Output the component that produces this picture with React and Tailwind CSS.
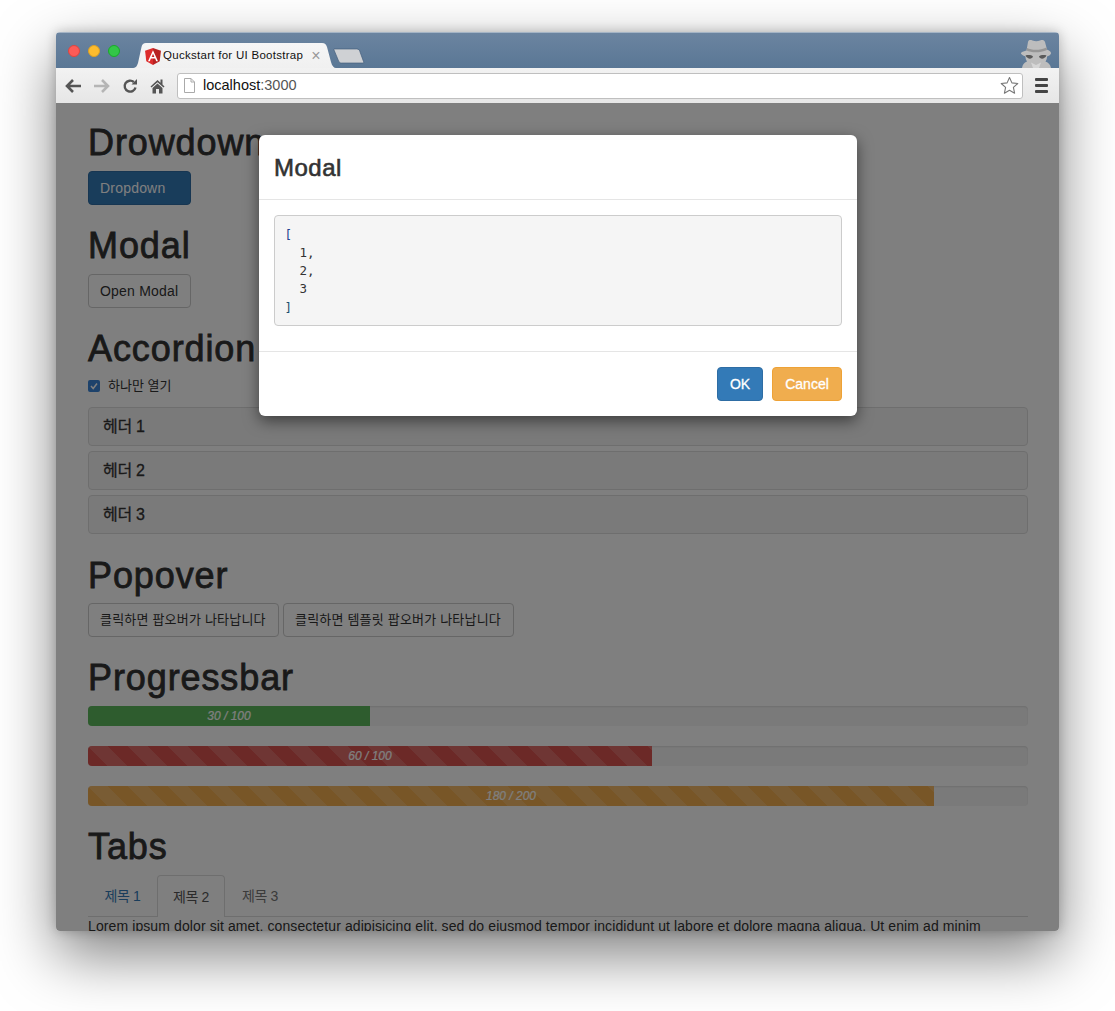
import React from "react";

const SANS = "[font-family:'Liberation_Sans','Noto_Sans_CJK_KR',sans-serif]";

function Heading({ children, className = "" }) {
  return (
    <h1 className={`h-10 text-[36px] leading-[44px] tracking-[0.025em] text-[#333] [-webkit-text-stroke:0.8px_#333] ${className}`}>
      {children}
    </h1>
  );
}

function Btn({ children, className = "", tone = "border-[#ccc] bg-white text-[#333]" }) {
  return (
    <button className={`h-[34px] rounded-[4px] border pl-[11px] text-left tracking-[0.2px] ${tone} ${className}`}>
      {children}
    </button>
  );
}

function Bar({ pct, label, color, striped, className = "" }) {
  return (
    <div className={`h-5 overflow-hidden rounded-[4px] bg-[#f5f5f5] shadow-[inset_0_1px_2px_rgba(0,0,0,0.1)] ${className}`}>
      <div
        style={{ width: pct + "%" }}
        className={`h-5 text-center text-[12px] italic leading-5 text-white [-webkit-text-stroke:0.2px_#fff] ${color} ${
          striped
            ? "bg-[linear-gradient(45deg,rgba(255,255,255,0.15)_25%,transparent_25%,transparent_50%,rgba(255,255,255,0.15)_50%,rgba(255,255,255,0.15)_75%,transparent_75%,transparent)] bg-[length:40px_40px]"
            : ""
        }`}
      >
        {label}
      </div>
    </div>
  );
}

function Panel({ children }) {
  return (
    <div className="flex h-[39px] items-center rounded-[4px] border border-[#ddd] bg-[#f5f5f5] px-[14px] text-[16px] tracking-[-0.3px] text-[#333] [-webkit-text-stroke:0.3px_#333]">
      {children}
    </div>
  );
}

function Dot({ color, border }) {
  return <span className={`h-3 w-3 rounded-full border ${color} ${border}`} />;
}

function TabShape() {
  return (
    <svg className="absolute inset-0" width="204" height="25" viewBox="0 0 204 25">
      <defs>
        <linearGradient id="tabg" x1="0" y1="0" x2="0" y2="1">
          <stop offset="0" stopColor="#f6f6f6" />
          <stop offset="1" stopColor="#f0f0f0" />
        </linearGradient>
      </defs>
      <path d="M0 25C4 25 5 23 6 20L9.500 4C10 1.500 11.500 0 14 0H190C193 0 194 1.500 195 4L199 19C200 23 202 25 204 25Z" fill="url(#tabg)" />
    </svg>
  );
}

function AngularLogo() {
  return (
    <svg className="mr-[2px] shrink-0" width="16" height="17" viewBox="0 0 15 16">
      <path d="M7.500 0L0 2.700L1.200 12.500L7.500 16Z" fill="#dd2c2c" />
      <path d="M7.500 0L15 2.700L13.800 12.500L7.500 16Z" fill="#b82222" />
      <path d="M7.500 2L2.800 12.400H4.500L5.500 9.900H9.500L10.500 12.400H12.200ZM6.200 8.500L7.500 5.300L8.800 8.500Z" fill="#fff" />
    </svg>
  );
}

function Spy() {
  return (
    <svg width="34" height="29" viewBox="0 0 34 29">
      <path d="M3 29C3.500 26 5 23.500 8 22.500C7 21 6.500 19.500 6.500 17.500C4 16.500 1.500 15 2 14C3 12.500 5.500 12 7.500 11.500L9 3C9.500 1 11 0.500 13.500 1.500C16 2.500 18.500 2.500 21 1.500C23.500 0.500 25 1 26 3L28 10.500C30 11.500 32.500 13 32 14.500C31.500 16 29.500 17 28 17.500C28 19.500 27.500 21 26.500 22.500C29.500 23.500 31.500 26 32 29Z" fill="#bdbdbd" />
      <path d="M8 9C13 11.500 21 11.500 27.500 8.500L28 11C21 14 13 14 7.500 11.500Z" fill="#969696" />
      <path d="M6.500 16.500C9 15.800 12.500 16 14 17.500C13 20.500 8.500 20.500 6.500 16.500ZM27.500 16.500C25 15.800 21.500 16 20 17.500C21 20.500 25.500 20.500 27.500 16.500Z" fill="#5a5a5a" />
      <path d="M12 23.500L17 26L22 23.500L20 29H14Z" fill="#d6d6d6" />
    </svg>
  );
}

export default function App() {
  return (
    <div className={`h-[1011px] w-[1115px] overflow-hidden bg-white pl-14 pt-8 text-[14px] ${SANS}`}>
      <div className="relative flex h-[899px] w-[1003px] flex-col overflow-hidden rounded-[4px] shadow-[0_24px_60px_rgba(0,0,0,0.5),0_0_12px_rgba(0,0,0,0.22)]">
        {/* title bar */}
        <div className="flex h-9 shrink-0 items-end justify-between border-t border-[#a5b4c5] bg-[linear-gradient(#6b84a0,#5a7795)]">
          <div className="flex h-full items-end">
            <div className="mb-[11px] ml-3 mr-3 flex gap-2">
              <Dot color="bg-[#fc5b57]" border="border-[#e0443e]" />
              <Dot color="bg-[#fdbc2e]" border="border-[#dea123]" />
              <Dot color="bg-[#33c748]" border="border-[#1aab29]" />
            </div>
            <div className="relative h-[25px] w-[204px] shrink-0">
              <TabShape />
              <div className="relative flex h-full items-center pl-[13px] pt-[1px] text-[11.500px] text-[#111]">
                <AngularLogo />
                <span className="whitespace-nowrap tracking-[0.28px]">Quckstart for UI Bootstrap</span>
                <span className="ml-[8px] text-[16px] leading-none text-[#999]">×</span>
              </div>
            </div>
            <svg className="mb-[4px] ml-[-3px] shrink-0" width="32" height="16" viewBox="0 0 34 17">
              <path d="M1.500 1H25C27 1 28 2 28.500 3.500L32.500 14.500C33 15.500 32.500 16 31 16H9C7.500 16 6.500 15 6 14L1 2C0.800 1.400 1 1 1.500 1Z" fill="#cfd1d4" stroke="#48627f" strokeWidth="0.8" />
            </svg>
          </div>
          <div className="mr-[6px] flex items-end">
            <Spy />
          </div>
        </div>

        {/* toolbar */}
        <div className="flex h-[35px] shrink-0 items-center bg-[linear-gradient(#f2f2f2,#e6e6e6)] pl-[9px]">
          <svg className="mr-[11px]" width="17" height="14" viewBox="0 0 17 14"><path d="M8 1L2 7L8 13M2 7H16" fill="none" stroke="#555" strokeWidth="2.600" /></svg>
          <svg className="mr-3" width="17" height="14" viewBox="0 0 17 14"><path d="M9 1L15 7L9 13M15 7H1" fill="none" stroke="#b5b5b5" strokeWidth="2.600" /></svg>
          <svg className="mr-3" width="16" height="16" viewBox="0 0 16 16"><path d="M13.500 9.500A5.500 5.500 0 1 1 11.800 4" fill="none" stroke="#555" strokeWidth="2.400" /><path d="M9.500 6.500H15V1Z" fill="#555" /></svg>
          <svg className="mr-3" width="15" height="16" viewBox="0 0 15 16"><path d="M7.500 2L0.500 8.500L1.500 9.500L7.500 4.200L13.500 9.500L14.500 8.500L12.500 6.600V1.500H10.500V4.800ZM2.500 10V15.500H6V11H9V15.500H12.500V10L7.500 5.500Z" fill="#555" /></svg>
          <div className="flex h-[26px] w-[846px] items-center rounded-[3px] border border-[#bfbfbf] bg-white pl-[6px] pr-[3px] text-[14.500px]">
            <svg className="mr-2" width="11" height="15" viewBox="0 0 11 15"><path d="M0.500 0.500H7L10.500 4V14.500H0.500ZM7 0.500V4H10.500" fill="#fff" stroke="#aaa" /></svg>
            <span className="text-[#111]">localhost</span>
            <span className="text-[#555]">:3000</span>
            <svg className="ml-auto" width="19" height="19" viewBox="0 0 19 19"><path d="M9.500 1.500L11.900 6.900L17.800 7.500L13.400 11.400L14.600 17.200L9.500 14.300L4.400 17.200L5.600 11.400L1.200 7.500L7.100 6.900Z" fill="#fff" stroke="#777" strokeWidth="1.100" strokeLinejoin="round" /></svg>
          </div>
          <div className="ml-3 flex flex-col gap-[3px]">
            <span className="h-[3px] w-[13px] rounded-[1px] bg-[#444]" />
            <span className="h-[3px] w-[13px] rounded-[1px] bg-[#444]" />
            <span className="h-[3px] w-[13px] rounded-[1px] bg-[#444]" />
          </div>
        </div>

        {/* page */}
        <div className="relative min-h-0 flex-1 overflow-hidden bg-white">
          <div className="flex flex-col pl-8 pr-[31px] pt-[18px] leading-5 text-[#333]">
            <Heading>Drowdown</Heading>
            <Btn className="mt-[10px] w-[103px]" tone="border-[#2e6da4] bg-[#337ab7] text-white">Dropdown</Btn>

            <Heading className="mt-[19px]">Modal</Heading>
            <Btn className="mt-[10px] w-[103px]">Open Modal</Btn>

            <Heading className="mt-[19px]">Accordion</Heading>
            <label className="mt-[9px] flex h-5 items-center text-[13px]">
              <span className="mr-2 flex h-3 w-3 items-center justify-center rounded-[2px] bg-[#3a85d6]">
                <svg width="10" height="10" viewBox="0 0 10 10"><path d="M2 5L4.200 7.500L8 2.500" fill="none" stroke="#fff" strokeWidth="1.500" /></svg>
              </span>
              하나만 열기
            </label>
            <div className="mt-[11px] flex flex-col gap-[5px]">
              <Panel>헤더 1</Panel>
              <Panel>헤더 2</Panel>
              <Panel>헤더 3</Panel>
            </div>

            <Heading className="mt-5">Popover</Heading>
            <div className="mt-[9px] flex gap-1 text-[13px]">
              <Btn className="w-[191px] whitespace-nowrap">클릭하면 팝오버가 나타납니다</Btn>
              <Btn className="w-[231px] whitespace-nowrap">클릭하면 템플릿 팝오버가 나타납니다</Btn>
            </div>

            <Heading className="mt-[19px]">Progressbar</Heading>
            <Bar className="mt-[10px]" pct={30} label="30 / 100" color="bg-[#5cb85c]" />
            <Bar className="mt-5" pct={60} label="60 / 100" color="bg-[#d9534f]" striped />
            <Bar className="mt-5" pct={90} label="180 / 200" color="bg-[#f0ad4e]" striped />

            <Heading className="mt-[19px]">Tabs</Heading>
            <div className="mt-[10px] flex h-[42px] items-stretch border-b border-[#ddd] tracking-[-0.3px]">
              <span className="flex w-[69px] items-center justify-center text-[#337ab7]">제목 1</span>
              <span className="-mb-px flex w-[68px] items-center justify-center rounded-t-[4px] border border-b-0 border-[#ddd] bg-white text-[#555]">제목 2</span>
              <span className="flex w-[70px] items-center justify-center text-[#777]">제목 3</span>
            </div>
            <p className="-mt-px whitespace-nowrap text-[14px] leading-5 tracking-[0.1px]">
              Lorem ipsum dolor sit amet, consectetur adipisicing elit, sed do eiusmod tempor incididunt ut labore et dolore magna aliqua. Ut enim ad minim
            </p>
          </div>

          {/* backdrop */}
          <div className="absolute inset-0 bg-black/50" />

          {/* modal */}
          <div className="absolute left-[203px] top-8 w-[598px] rounded-[6px] bg-white shadow-[0_5px_15px_rgba(0,0,0,0.5)]">
            <div className="flex h-[65px] items-center border-b border-[#e5e5e5] px-[15px] pt-[1px]">
              <h3 className="text-[24px] tracking-[0.02em] text-[#333] [-webkit-text-stroke:0.6px_#333]">Modal</h3>
            </div>
            <div className="h-[152px] border-b border-[#e5e5e5] p-[15px]">
              <pre className="h-[111px] rounded-[4px] border border-[#ccc] bg-[#f5f5f5] px-[9.500px] py-[9.500px] font-['DejaVu_Sans_Mono',monospace] text-[12.500px] leading-[18.300px] text-[#333]">
                <span className="text-[#1f3f8f]">[</span>
                {"\n  1,\n  2,\n  3\n"}
                <span className="text-[#1f4f6f]">]</span>
              </pre>
            </div>
            <div className="flex justify-end gap-[9px] p-[15px]">
              <button className="h-[34px] w-[46px] rounded-[4px] border border-[#2e6da4] bg-[#337ab7] text-[14px] text-white [-webkit-text-stroke:0.3px_#fff]">OK</button>
              <button className="h-[34px] w-[70px] rounded-[4px] border border-[#eea236] bg-[#f0ad4e] text-[14px] text-white [-webkit-text-stroke:0.3px_#fff]">Cancel</button>
            </div>
          </div>
        </div>
      </div>
    </div>
  );
}
